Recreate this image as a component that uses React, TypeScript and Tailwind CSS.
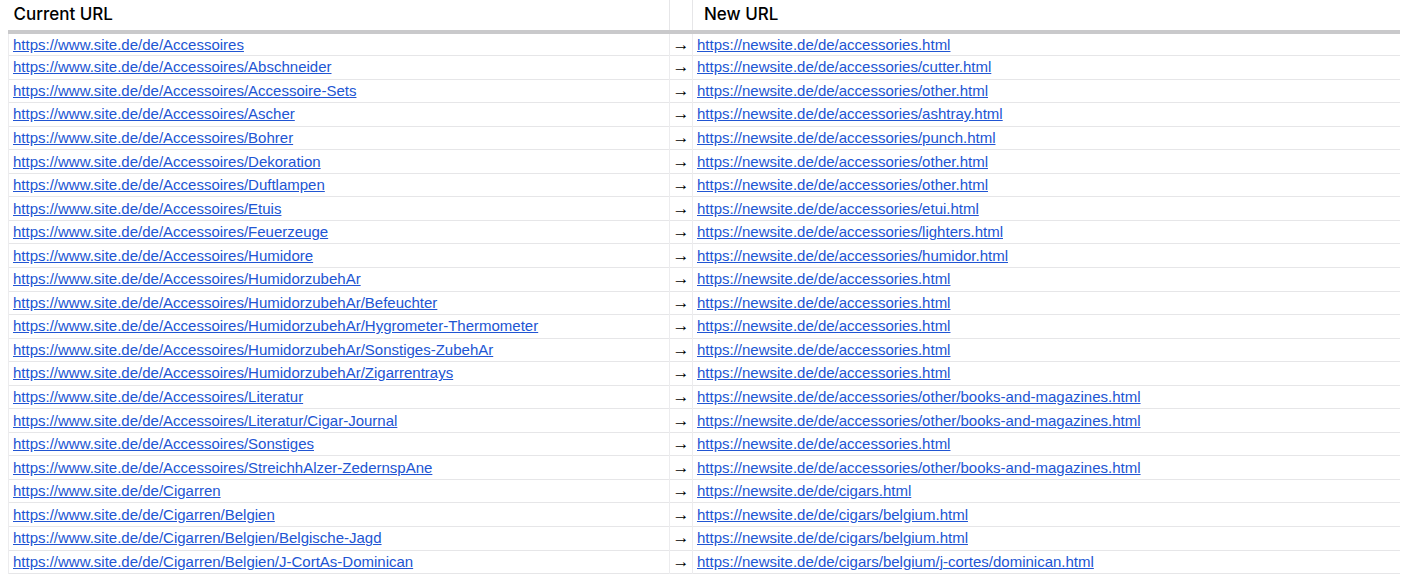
import React from 'react';

const rows: [string, string][] = [
  ['https://www.site.de/de/Accessoires', 'https://newsite.de/de/accessories.html'],
  ['https://www.site.de/de/Accessoires/Abschneider', 'https://newsite.de/de/accessories/cutter.html'],
  ['https://www.site.de/de/Accessoires/Accessoire-Sets', 'https://newsite.de/de/accessories/other.html'],
  ['https://www.site.de/de/Accessoires/Ascher', 'https://newsite.de/de/accessories/ashtray.html'],
  ['https://www.site.de/de/Accessoires/Bohrer', 'https://newsite.de/de/accessories/punch.html'],
  ['https://www.site.de/de/Accessoires/Dekoration', 'https://newsite.de/de/accessories/other.html'],
  ['https://www.site.de/de/Accessoires/Duftlampen', 'https://newsite.de/de/accessories/other.html'],
  ['https://www.site.de/de/Accessoires/Etuis', 'https://newsite.de/de/accessories/etui.html'],
  ['https://www.site.de/de/Accessoires/Feuerzeuge', 'https://newsite.de/de/accessories/lighters.html'],
  ['https://www.site.de/de/Accessoires/Humidore', 'https://newsite.de/de/accessories/humidor.html'],
  ['https://www.site.de/de/Accessoires/HumidorzubehAr', 'https://newsite.de/de/accessories.html'],
  ['https://www.site.de/de/Accessoires/HumidorzubehAr/Befeuchter', 'https://newsite.de/de/accessories.html'],
  ['https://www.site.de/de/Accessoires/HumidorzubehAr/Hygrometer-Thermometer', 'https://newsite.de/de/accessories.html'],
  ['https://www.site.de/de/Accessoires/HumidorzubehAr/Sonstiges-ZubehAr', 'https://newsite.de/de/accessories.html'],
  ['https://www.site.de/de/Accessoires/HumidorzubehAr/Zigarrentrays', 'https://newsite.de/de/accessories.html'],
  ['https://www.site.de/de/Accessoires/Literatur', 'https://newsite.de/de/accessories/other/books-and-magazines.html'],
  ['https://www.site.de/de/Accessoires/Literatur/Cigar-Journal', 'https://newsite.de/de/accessories/other/books-and-magazines.html'],
  ['https://www.site.de/de/Accessoires/Sonstiges', 'https://newsite.de/de/accessories.html'],
  ['https://www.site.de/de/Accessoires/StreichhAlzer-ZedernspAne', 'https://newsite.de/de/accessories/other/books-and-magazines.html'],
  ['https://www.site.de/de/Cigarren', 'https://newsite.de/de/cigars.html'],
  ['https://www.site.de/de/Cigarren/Belgien', 'https://newsite.de/de/cigars/belgium.html'],
  ['https://www.site.de/de/Cigarren/Belgien/Belgische-Jagd', 'https://newsite.de/de/cigars/belgium.html'],
  ['https://www.site.de/de/Cigarren/Belgien/J-CortAs-Dominican', 'https://newsite.de/de/cigars/belgium/j-cortes/dominican.html'],
];

export default function App() {
  return (
    <div className="h-[580px] bg-white px-2 overflow-hidden" style={{ fontFamily: '"Liberation Sans", Arial, sans-serif' }}>
      <table className="w-full border-collapse text-[15px]">
        <thead>
          <tr className="border-b-4 border-[#c9c9cb] h-[32px]">
            <th className="w-[661px] text-left font-medium text-[17px] text-black pl-[5px] align-middle" style={{ fontFamily: 'Inter, sans-serif' }}>Current URL</th>
            <th className="w-[23px] border-l border-[#e6e6e8]"></th>
            <th className="text-left font-medium text-[17px] text-black pl-[11px] border-l border-[#e6e6e8]" style={{ fontFamily: 'Inter, sans-serif' }}>New URL</th>
          </tr>
        </thead>
        <tbody>
          {rows.map(([a, b], i) => (
            <tr key={i} className="h-[23.55px] border-b border-[#e6e6e8]">
              <td className="pl-[4px] leading-[18px] border-l border-[#ececee]">
                <a href="#" className="text-[#2155d3] underline">{a}</a>
              </td>
              <td className="text-center text-black text-[17px] leading-[18px] border-l border-[#ececee]">→</td>
              <td className="pl-[4px] leading-[18px] border-l border-[#ececee]">
                <a href="#" className="text-[#2155d3] underline">{b}</a>
              </td>
            </tr>
          ))}
        </tbody>
      </table>
    </div>
  );
}
